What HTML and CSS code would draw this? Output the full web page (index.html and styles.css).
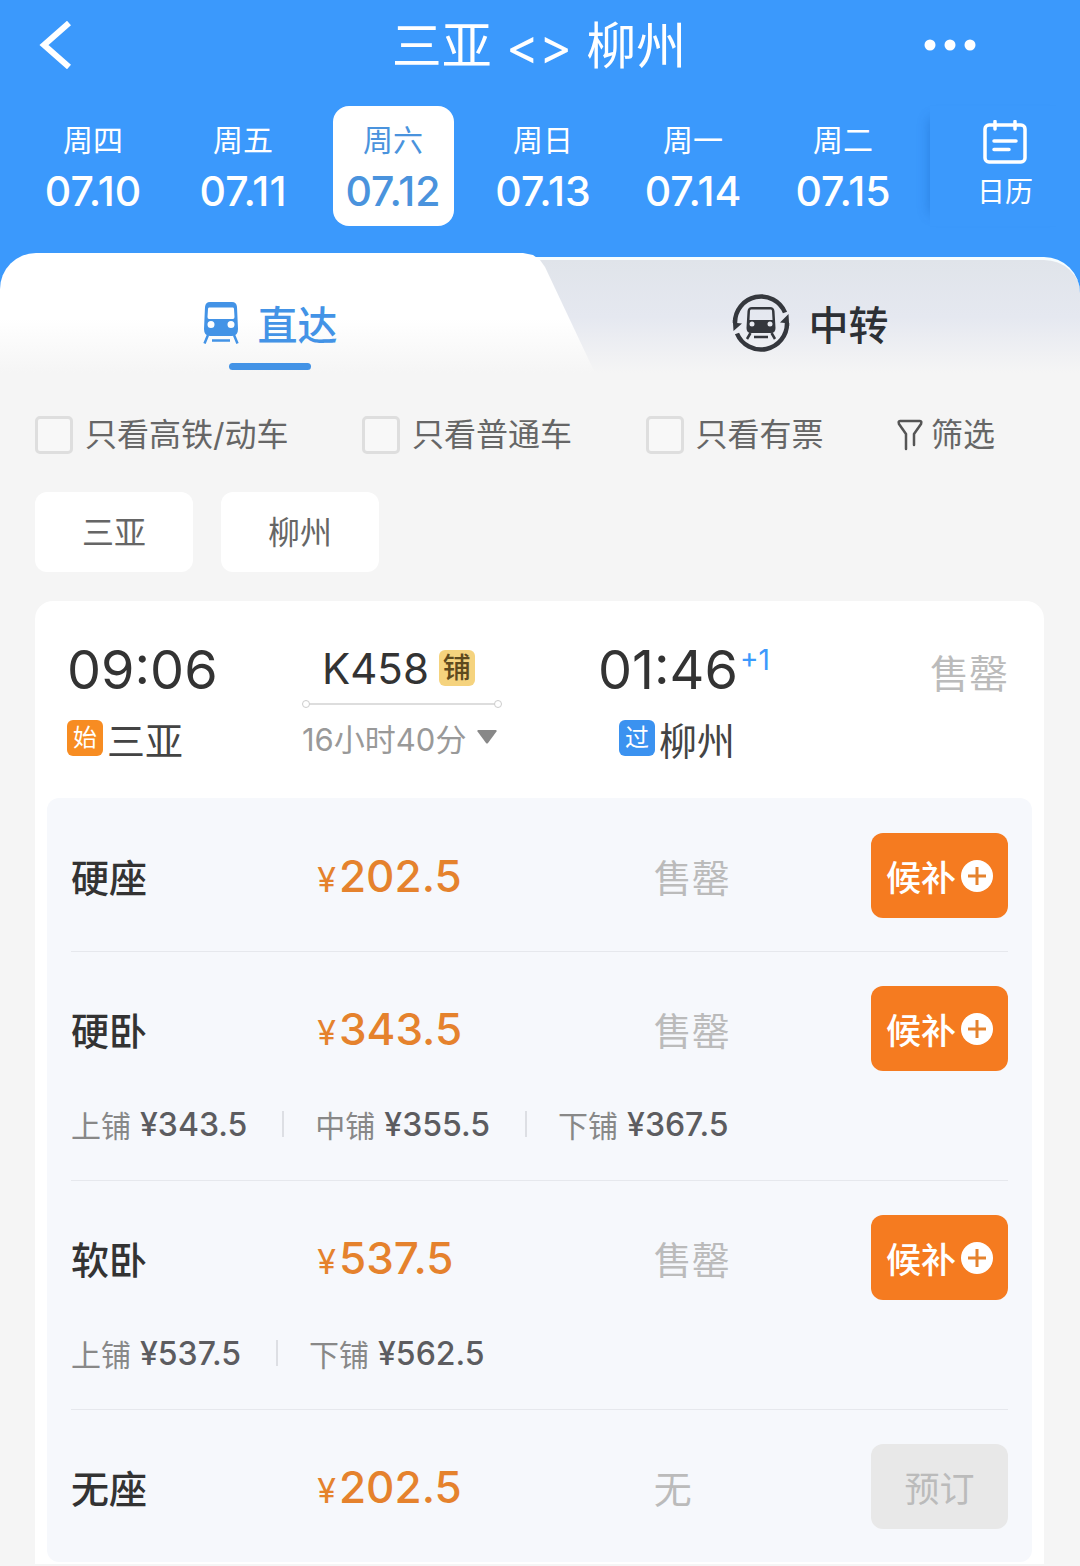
FILE: index.html
```html
<!DOCTYPE html>
<html lang="zh-CN">
<head>
    <meta charset="UTF-8">
    <meta name="viewport" content="width=device-width, initial-scale=1.0">
    <title>三亚 - 柳州</title>
    <link rel="stylesheet" href="styles.css">
</head>
<body>

    <header class="header">
        <div class="title-bar">
            <button class="icon-btn" type="button" aria-label="返回">
                <svg width="34" height="48" viewBox="0 0 34 48" fill="none" stroke="#fff" stroke-width="6"><path d="M31 2 L6 24 L31 46"/></svg>
            </button>
            <h1>三亚 &lt;&gt; 柳州</h1>
            <button class="icon-btn" type="button" aria-label="更多">
                <svg width="52" height="12" viewBox="0 0 52 12" fill="#fff"><circle cx="6" cy="6" r="5.5"/><circle cx="26" cy="6" r="5.5"/><circle cx="46" cy="6" r="5.5"/></svg>
            </button>
        </div>
        <div class="date-bar">
            <div class="dates">
                <button class="date" type="button"><span>周四</span><b>07.10</b></button>
                <button class="date" type="button"><span>周五</span><b>07.11</b></button>
                <button class="date active" type="button"><span>周六</span><b>07.12</b></button>
                <button class="date" type="button"><span>周日</span><b>07.13</b></button>
                <button class="date" type="button"><span>周一</span><b>07.14</b></button>
                <button class="date" type="button"><span>周二</span><b>07.15</b></button>
            </div>
            <button class="calendar" type="button">
                <svg width="44" height="44" viewBox="0 0 44 44" fill="none" stroke="#fff" stroke-width="3.5" stroke-linecap="round">
                    <rect x="2" y="5" width="40" height="37" rx="4"/>
                    <path d="M12 1.5V9M32 1.5V9M11 21H33M11 29.500H26"/>
                </svg>
                <span>日历</span>
            </button>
        </div>
    </header>

    <nav class="tabs">
        <button class="tab tab-direct" type="button">
            <span class="tab-label">
                <svg width="36" height="42" viewBox="0 0 36 42">
                    <path fill="#4393e6" fill-rule="evenodd" d="M7 0H29Q33.500 0 34 5L35 27Q35 34 29 34H7Q1 34 1 27L2 5Q2.500 0 7 0ZM6 5.500Q5 5.500 5 7L4.500 15Q4.500 17 6 17H30Q31.500 17 31.500 15L31 7Q31 5.500 30 5.500ZM8 19A3.500 3.500 0 1 0 8 26A3.500 3.500 0 1 0 8 19ZM28 19A3.500 3.500 0 1 0 28 26A3.500 3.500 0 1 0 28 19Z"/>
                    <path fill="none" stroke="#4393e6" stroke-width="2.500" d="M5 33L1.500 41.500M31 33L34.500 41.500M9 38.500H27"/>
                </svg>
                直达
            </span>
        </button>
        <button class="tab tab-transfer" type="button">
            <span class="tab-label">
                <svg width="58" height="58" viewBox="0 0 58 58">
                    <g fill="none" stroke="#34373d" stroke-width="4.500">
                        <path d="M53 18.500A26 26 0 0 0 3 29"/>
                        <path d="M5 39.500A26 26 0 0 0 55 29"/>
                    </g>
                    <path fill="#34373d" d="M0.800 26L1.500 37L10 29.500L5 29ZM57.200 32L56.500 20L48 28.500L53 29Z"/>
                    <path fill="#34373d" fill-rule="evenodd" d="M20 13H38Q42 13 42.500 17L43.500 34Q43.500 39 39 39H19Q14.500 39 14.500 34L15.500 17Q16 13 20 13ZM19 15.500Q18 15.500 18 17L17.500 26H40.500L40 17Q40 15.500 39 15.500ZM20 27.500A2.500 2.500 0 1 0 20 32.500A2.500 2.500 0 1 0 20 27.500ZM38 27.500A2.500 2.500 0 1 0 38 32.500A2.500 2.500 0 1 0 38 27.500Z"/>
                    <path fill="none" stroke="#34373d" stroke-width="2.500" d="M18.500 39L15 45M39.500 39L43 45M22 43H36"/>
                </svg>
                中转
            </span>
        </button>
    </nav>

    <main>
        <div class="filters">
            <label><input type="checkbox">只看高铁/动车</label>
            <label><input type="checkbox">只看普通车</label>
            <label><input type="checkbox">只看有票</label>
            <button class="filter-btn" type="button">
                <svg width="26" height="32" viewBox="0 0 26 32" fill="none" stroke="#555" stroke-width="2.500" stroke-linecap="round" stroke-linejoin="round"><path d="M9 30V15L2 5Q1 2 3 2H23Q25 2 24 5L17 15V26"/></svg>
                筛选
            </button>
        </div>

        <div class="chips">
            <button class="chip" type="button">三亚</button>
            <button class="chip" type="button">柳州</button>
        </div>

        <section class="card">
            <div class="train">
                <div class="depart">
                    <div class="time">09:06</div>
                    <div class="station"><span class="tag tag-start">始</span>三亚</div>
                </div>
                <div class="trip">
                    <div class="train-no">K458<span class="tag tag-bed">铺</span></div>
                    <div class="line"></div>
                    <button class="duration" type="button">
                        16小时40分
                        <svg width="20" height="14" viewBox="0 0 20 14" fill="#888"><path d="M1 0H19Q20 0 19.500 1.500L11 13Q10 14 9 13L0.500 1.500Q0 0 1 0Z"/></svg>
                    </button>
                </div>
                <div class="arrive">
                    <div class="time">01:46<sup>+1</sup></div>
                    <div class="station"><span class="tag tag-pass">过</span>柳州</div>
                </div>
                <div class="sold-out">售罄</div>
            </div>

            <ul class="seats">
                <li class="seat">
                    <span class="seat-name">硬座</span>
                    <span class="price"><small>¥</small>202.5</span>
                    <span class="status">售罄</span>
                    <button class="book" type="button">候补<svg width="32" height="32" viewBox="0 0 32 32"><circle cx="16" cy="16" r="16" fill="#fff"/><path d="M16 7V25M7 16H25" stroke="#e5822d" stroke-width="3"/></svg></button>
                </li>
                <li class="seat">
                    <span class="seat-name">硬卧</span>
                    <span class="price"><small>¥</small>343.5</span>
                    <span class="status">售罄</span>
                    <button class="book" type="button">候补<svg width="32" height="32" viewBox="0 0 32 32"><circle cx="16" cy="16" r="16" fill="#fff"/><path d="M16 7V25M7 16H25" stroke="#e5822d" stroke-width="3"/></svg></button>
                    <div class="berths">
                        <span class="berth">上铺 <b>¥343.5</b></span>
                        <span class="berth">中铺 <b>¥355.5</b></span>
                        <span class="berth">下铺 <b>¥367.5</b></span>
                    </div>
                </li>
                <li class="seat">
                    <span class="seat-name">软卧</span>
                    <span class="price"><small>¥</small>537.5</span>
                    <span class="status">售罄</span>
                    <button class="book" type="button">候补<svg width="32" height="32" viewBox="0 0 32 32"><circle cx="16" cy="16" r="16" fill="#fff"/><path d="M16 7V25M7 16H25" stroke="#e5822d" stroke-width="3"/></svg></button>
                    <div class="berths">
                        <span class="berth">上铺 <b>¥537.5</b></span>
                        <span class="berth">下铺 <b>¥562.5</b></span>
                    </div>
                </li>
                <li class="seat">
                    <span class="seat-name">无座</span>
                    <span class="price"><small>¥</small>202.5</span>
                    <span class="status">无</span>
                    <button class="book" type="button" disabled>预订</button>
                </li>
            </ul>
        </section>
    </main>

</body>
</html>
```
FILE: styles.css
```css
* {
    box-sizing: border-box;
}
body {
    margin: 0;
    background: #f5f5f5;
    color: #333;
    font-family: Inter, "Noto Sans CJK SC", sans-serif;
    font-size: 32px;
}
button {
    margin: 0;
    padding: 0;
    border: 0;
    background: none;
    color: inherit;
    font: inherit;
    cursor: pointer;
}
svg {
    display: block;
    flex-shrink: 0;
}

/* header */
.header {
    background: #3b99fc;
    color: #fff;
    padding-bottom: 27px;
}
.title-bar {
    display: flex;
    align-items: center;
    justify-content: space-between;
    height: 90px;
    padding: 0 104px 0 38px;
}
.icon-btn {
    width: 52px;
}
.title-bar h1 {
    flex: 1;
    margin: 0 0 0 12px;
    padding: 0 0 6px 52px;
    text-align: center;
    font-size: 50px;
    font-weight: 400;
}
.date-bar {
    display: flex;
    margin-top: 16px;
}
.dates {
    flex: 1;
    display: grid;
    grid-template-columns: repeat(6, 1fr);
    justify-items: center;
    padding: 0 12px 0 18px;
}
.date {
    display: flex;
    flex-direction: column;
    align-items: center;
    width: 121px;
    height: 120px;
    padding-top: 12px;
    border-radius: 16px;
}
.date span {
    font-size: 30px;
    line-height: 44px;
}
.date b {
    font-size: 41px;
    font-weight: 500;
    line-height: 58px;
}
.date.active {
    background: #fff;
    color: #4a93dd;
}
.calendar {
    display: flex;
    flex-direction: column;
    align-items: center;
    width: 150px;
    padding-top: 14px;
    box-shadow: -12px 0 12px -12px rgba(0, 70, 160, 0.3);
}
.calendar span {
    margin-top: 6px;
    font-size: 28px;
    line-height: 44px;
}

/* tabs */
.tabs {
    display: grid;
    grid-template-columns: 1fr 1fr;
    height: 120px;
    background: #3b99fc;
}
.tab {
    position: relative;
    display: flex;
    flex-direction: column;
    align-items: center;
    padding-top: 42px;
    font-size: 40px;
    font-weight: 500;
}
.tab-label {
    position: relative;
    display: flex;
    align-items: center;
    gap: 19px;
    height: 56px;
}
.tab-direct {
    z-index: 1;
    color: #4393e6;
}
/* white sheet with the slanted right edge */
.tab-direct::before {
    content: "";
    position: absolute;
    inset: 0 -55px 0 0;
    border-top-left-radius: 36px;
    background: linear-gradient(#fff 55%, #f5f5f5);
    clip-path: polygon(0 0, calc(100% - 72px) 0, calc(100% - 62px) 2px, calc(100% - 55px) 7px, calc(100% - 50px) 14px, 100% 100%, 0 100%);
}
.tab-direct::after {
    content: "";
    position: relative;
    width: 82px;
    height: 7px;
    margin-top: 12px;
    border-radius: 4px;
    background: #4393e6;
}
.tab-transfer {
    margin: 4px 0 0 -60px;
    padding: 35px 0 0 60px;
    border-top: 3px solid #f6fdff;
    border-top-right-radius: 36px;
    background: linear-gradient(#e0e4ea, #e5e8f0 50%, #f5f5f5);
    color: #2d3035;
}

/* filters */
.filters {
    display: flex;
    align-items: center;
    justify-content: space-between;
    padding: 38px 85px 0 35px;
    color: #666;
    line-height: 48px;
}
.filters label,
.filter-btn {
    display: flex;
    align-items: center;
}
.filters input {
    appearance: none;
    width: 38px;
    height: 38px;
    margin: 0 12px 0 0;
    border: 3px solid #dedede;
    border-radius: 5px;
    background: #f8f8f8;
}
.filter-btn {
    gap: 8px;
}
.chips {
    display: flex;
    gap: 28px;
    padding: 33px 35px 29px;
}
.chip {
    width: 158px;
    height: 80px;
    padding-bottom: 4px;
    border-radius: 12px;
    background: #fff;
    color: #666;
}

/* train card */
.card {
    margin: 0 36px 0 35px;
    padding: 0 12px 2px;
    border-radius: 18px 18px 0 0;
    background: #fff;
}
.train {
    display: grid;
    grid-template-columns: 235fr 296fr 250fr 160fr;
    padding: 39px 24px 28px 20px;
}
.time {
    height: 60px;
    font-size: 54px;
    font-weight: 400;
    line-height: 60px;
}
.time sup {
    margin-left: 2px;
    color: #3b99fc;
    font-size: 28px;
    line-height: 28px;
}
.station {
    display: flex;
    align-items: center;
    gap: 4px;
    height: 56px;
    margin: 10px 0 4px;
    color: #444;
    font-size: 38px;
}
.arrive .station {
    padding-left: 21px;
}
.tag {
    width: 36px;
    height: 36px;
    border-radius: 6px;
    color: #fff;
    font-size: 24px;
    line-height: 36px;
    text-align: center;
}
.tag-start {
    background: #f78c22;
}
.tag-pass {
    background: #3b92f0;
}
.tag-bed {
    background: #f5d37e;
    color: #5e4a1e;
    font-size: 28px;
    font-weight: 500;
}
.trip {
    width: 200px;
}
.train-no {
    display: flex;
    align-items: center;
    gap: 10px;
    height: 56px;
    padding-left: 20px;
    font-size: 42px;
}
.line {
    display: flex;
    align-items: center;
    justify-content: space-between;
    height: 16px;
    background: linear-gradient(#ddd, #ddd) center / 192px 2px no-repeat;
}
.line::before,
.line::after {
    content: "";
    width: 6px;
    height: 6px;
    border: 1px solid #ccc;
    border-radius: 50%;
    background: #fff;
}
.duration {
    display: flex;
    align-items: center;
    gap: 11px;
    height: 50px;
    color: #999;
    font-size: 31px;
    white-space: nowrap;
}
.sold-out {
    color: #bbb;
    font-size: 39px;
    line-height: 68px;
    text-align: right;
}

/* seats */
.seats {
    margin: 0;
    padding: 1px 24px 0;
    border-radius: 12px;
    background: #f6f8fc;
    list-style: none;
}
.seat {
    display: grid;
    grid-template-columns: 246fr 336fr 217fr 137px;
    align-items: center;
    padding: 34px 0 33px;
    border-bottom: 1px solid #e6e8ed;
}
.seat:last-child {
    border-bottom: 0;
}
.seat-name {
    font-size: 38px;
    font-weight: 500;
}
.price {
    color: #e5822d;
    font-size: 44px;
    font-weight: 500;
}
.price small {
    margin-right: 3px;
    font-size: 34px;
    font-weight: 400;
}
.status {
    color: #bbb;
    font-size: 38px;
}
.book {
    display: flex;
    align-items: center;
    justify-content: center;
    gap: 5px;
    height: 85px;
    border-radius: 12px;
    background: #f57b20;
    color: #fff;
    font-size: 35px;
    font-weight: 500;
}
.book:disabled {
    background: #e8e8e8;
    color: #bbb;
    font-weight: 400;
}
.berths {
    grid-column: 1 / -1;
    display: flex;
    align-items: center;
    height: 46px;
    margin-top: 30px;
    color: #888;
    font-size: 30px;
}
.berth {
    display: flex;
    align-items: center;
    gap: 9px;
}
.berth b {
    color: #5c5c60;
    font-size: 32px;
    font-weight: 500;
}
.berth + .berth::before {
    content: "";
    width: 2px;
    height: 26px;
    margin: 0 22px 0 35px;
    background: #dddfe4;
}
```
